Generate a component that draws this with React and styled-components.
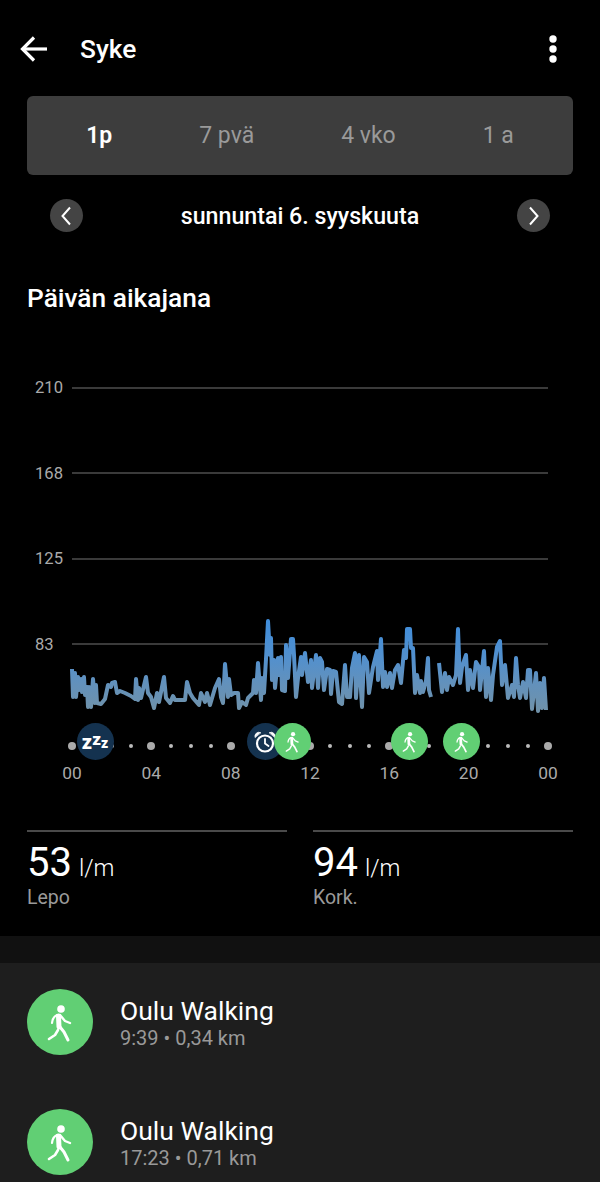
import React from 'react';
import styled, { createGlobalStyle } from 'styled-components';

const GlobalStyle = createGlobalStyle`
    html, body {
        margin: 0;
        background: #000;
    }
    body {
        font-family: Roboto, "Liberation Sans", sans-serif;
        color: #fff;
    }
`;

const RANGES = ['1p', '7 pvä', '4 vko', '1 a'];
const GRID_VALUES = [210, 168, 125, 83];
const HOUR_LABELS = ['00', '04', '08', '12', '16', '20', '00'];
const HOUR_DOTS = Array.from({ length: 25 }, (_, hour) => hour);

// heart rate samples as [x, y], with the sensor gap around 19h splitting the two runs
const HEART_RATE = [
    [
        [72, 669], [73, 697], [75, 673], [76, 697], [78, 677], [79, 690], [81, 679], [82, 692], [84, 677], [85, 695],
        [87, 687], [88, 707], [89, 687], [91, 707], [93, 679], [95, 703], [96, 685], [97, 703], [101, 704], [105, 699],
        [108, 685], [111, 687], [112, 683], [115, 682], [117, 693], [120, 691], [125, 693], [131, 696], [135, 699], [136, 679],
        [138, 700], [139, 688], [141, 698], [146, 677], [148, 693], [151, 697], [154, 708], [157, 693], [159, 702], [164, 677],
        [166, 698], [170, 703], [173, 696], [175, 700], [185, 700], [187, 682], [190, 693], [193, 698], [199, 705], [201, 693],
        [205, 702], [207, 693], [210, 705], [215, 688], [219, 679], [221, 697], [223, 703], [225, 664], [228, 697], [229, 679],
        [231, 695], [234, 693], [238, 693], [239, 708], [242, 702], [246, 705], [248, 698], [253, 693], [254, 680], [256, 693],
        [258, 663], [261, 700], [262, 678], [264, 693], [266, 659], [268, 621], [270, 655], [271, 638], [272, 680], [274, 660],
        [275, 688], [278, 658], [279, 675], [281, 657], [282, 690], [285, 691], [286, 645], [288, 678], [291, 639], [293, 639],
        [294, 655], [296, 697], [298, 678], [301, 657], [302, 675], [305, 653], [308, 682], [311, 660], [312, 688], [316, 655],
        [318, 688], [320, 658], [322, 662], [324, 690], [327, 669], [330, 670], [331, 694], [333, 671], [336, 672], [339, 702],
        [342, 704], [345, 665], [347, 697], [350, 697], [352, 668], [355, 653], [356, 698], [359, 655], [362, 707], [364, 657],
        [367, 662], [369, 693], [373, 667], [377, 651], [378, 680], [381, 639], [383, 687], [385, 672], [387, 687], [390, 673],
        [392, 688], [395, 670], [398, 665], [401, 683], [404, 650], [406, 658], [407, 629], [410, 629], [411, 648], [413, 648],
        [415, 693], [417, 675], [420, 693], [421, 681], [423, 692], [426, 681], [428, 658], [429, 690], [431, 697],
    ],
    [
        [439, 663], [442, 692], [445, 673], [447, 690], [449, 677], [453, 685], [456, 675], [458, 629], [460, 683], [462, 667],
        [466, 655], [468, 690], [470, 670], [473, 688], [476, 662], [479, 667], [480, 690], [484, 651], [486, 697], [488, 668],
        [491, 700], [493, 675], [497, 647], [500, 641], [502, 685], [505, 665], [508, 698], [512, 685], [514, 697], [516, 658],
        [518, 685], [520, 698], [523, 682], [526, 698], [528, 670], [530, 670], [532, 709], [536, 673], [538, 711], [540, 683],
        [542, 708], [544, 678], [546, 710],
    ],
];

const toPolyline = (points) => points.map(([x, y]) => `${x},${y}`).join(' ');

const WalkerIcon = ({ size }) => (
    <svg width={size} height={size} viewBox="0 0 66 66" fill="none" stroke="#fff" strokeLinecap="round" strokeLinejoin="round">
        <circle cx="34" cy="20" r="3.8" fill="#fff" stroke="none" />
        <path d="M31.5 27 L32 38" strokeWidth="5" />
        <path d="M30 26 Q25.5 28 25 34" strokeWidth="2.2" />
        <path d="M33 26 L38 32 L43 34" strokeWidth="2.4" />
        <path d="M33 38 L37 43 L41 51" strokeWidth="3" />
        <path d="M31 41 L28 46 L22 50" strokeWidth="2.6" />
    </svg>
);

const AlarmIcon = () => (
    <svg width="24" height="24" viewBox="0 0 24 24" fill="none" stroke="#fff" strokeWidth="2.2" strokeLinecap="round">
        <circle cx="12" cy="13.5" r="8" />
        <path d="M12 9 V13.5 L15.5 16" strokeWidth="1.8" />
        <path d="M2 7.2 A4 4 0 0 1 7.5 2.6 Z" fill="#fff" strokeWidth="0.8" />
        <path d="M22 7.2 A4 4 0 0 0 16.5 2.6 Z" fill="#fff" strokeWidth="0.8" />
    </svg>
);

const App = () => (
    <>
        <GlobalStyle />
        <Page>
            <Header>
                <BackButton>
                    <svg width="28" height="26" viewBox="0 0 28 26" fill="none" stroke="#fff" strokeWidth="3.2">
                        <path d="M27 13 H3" />
                        <path d="M14 1.5 L2.5 13 L14 24.5" />
                    </svg>
                </BackButton>
                <Title>Syke</Title>
                <MenuButton>
                    <svg width="8" height="28" viewBox="0 0 8 28" fill="#fff">
                        <circle cx="4" cy="4" r="3.7" />
                        <circle cx="4" cy="14" r="3.7" />
                        <circle cx="4" cy="24" r="3.7" />
                    </svg>
                </MenuButton>
            </Header>

            <Content>
                <RangeTabs>
                    {RANGES.map((range, index) => (
                        <RangeTab key={range} $active={index === 0}>{range}</RangeTab>
                    ))}
                </RangeTabs>

                <DateRow>
                    <RoundButton>
                        <svg width="12" height="20" viewBox="0 0 12 20" fill="none" stroke="#fff" strokeWidth="2">
                            <path d="M9 1.5 L1.5 10 L9 18.5" />
                        </svg>
                    </RoundButton>
                    <DateLabel>sunnuntai 6. syyskuuta</DateLabel>
                    <RoundButton>
                        <svg width="12" height="20" viewBox="0 0 12 20" fill="none" stroke="#fff" strokeWidth="2">
                            <path d="M3 1.5 L10.5 10 L3 18.5" />
                        </svg>
                    </RoundButton>
                </DateRow>

                <SectionTitle>Päivän aikajana</SectionTitle>
            </Content>

            <Chart>
                <GridRows>
                    {GRID_VALUES.map((value) => (
                        <GridRow key={value}>
                            <GridValue>{value}</GridValue>
                            <GridLine />
                        </GridRow>
                    ))}
                </GridRows>
                <HeartRateLine viewBox="0 610 600 110" width="600" height="110" fill="none">
                    <defs>
                        <linearGradient id="rateFade" gradientUnits="userSpaceOnUse" x1="0" y1="620" x2="0" y2="712">
                            <stop offset="0" stopColor="#3f8ddb" />
                            <stop offset="0.4" stopColor="#5290ce" />
                            <stop offset="0.7" stopColor="#6391bb" />
                            <stop offset="1" stopColor="#7092a9" />
                        </linearGradient>
                    </defs>
                    {HEART_RATE.map((run) => (
                        <polyline
                            key={run[0][0]}
                            points={toPolyline(run)}
                            stroke="url(#rateFade)"
                            strokeWidth="4"
                            strokeLinejoin="round"
                        />
                    ))}
                </HeartRateLine>

                <Timeline>
                    {HOUR_DOTS.map((hour) => (
                        <DotCell key={hour}>
                            <HourDot $major={hour % 4 === 0} />
                        </DotCell>
                    ))}
                    <Marker $center={95} $bg="#14324f">
                        <Sleep>
                            <SleepZ $size={20}>z</SleepZ>
                            <SleepZ $size={17} $lift={4}>z</SleepZ>
                            <SleepZ $size={14} $lift={1}>z</SleepZ>
                        </Sleep>
                    </Marker>
                    <Marker $center={265} $bg="#14324f"><AlarmIcon /></Marker>
                    <Marker $center={292} $bg="#61cf74"><WalkerIcon size={37} /></Marker>
                    <Marker $center={409} $bg="#61cf74"><WalkerIcon size={37} /></Marker>
                    <Marker $center={461.5} $bg="#61cf74"><WalkerIcon size={37} /></Marker>
                </Timeline>

                <HourLabels>
                    {HOUR_LABELS.map((label, index) => (
                        <HourLabel key={index}>{label}</HourLabel>
                    ))}
                </HourLabels>
            </Chart>

            <Stats>
                <Stat>
                    <StatValue>53<StatUnit>l/m</StatUnit></StatValue>
                    <StatLabel>Lepo</StatLabel>
                </Stat>
                <Stat>
                    <StatValue>94<StatUnit>l/m</StatUnit></StatValue>
                    <StatLabel>Kork.</StatLabel>
                </Stat>
            </Stats>

            <Spacer />

            <ActivityList>
                <Activity>
                    <ActivityBadge><WalkerIcon size={66} /></ActivityBadge>
                    <ActivityText>
                        <ActivityName>Oulu Walking</ActivityName>
                        <ActivityMeta>9:39 • 0,34 km</ActivityMeta>
                    </ActivityText>
                </Activity>
                <Activity>
                    <ActivityBadge><WalkerIcon size={66} /></ActivityBadge>
                    <ActivityText>
                        <ActivityName>Oulu Walking</ActivityName>
                        <ActivityMeta>17:23 • 0,71 km</ActivityMeta>
                    </ActivityText>
                </Activity>
            </ActivityList>
        </Page>
    </>
);

const Page = styled.div`
    width: 600px;
    height: 1182px;
    overflow: hidden;
    background: #000;
`;

const Header = styled.header`
    display: flex;
    align-items: center;
    height: 94px;
    padding: 2px 0 0 20px;
`;

const BackButton = styled.div`
    display: flex;
    width: 60px;
`;

const Title = styled.h1`
    flex: 1;
    margin: 0;
    font-size: 26.3px;
    font-weight: 500;
`;

const MenuButton = styled.div`
    display: flex;
    margin-right: 43px;
`;

const Content = styled.div`
    padding: 0 27px;
`;

const RangeTabs = styled.div`
    display: flex;
    justify-content: center;
    align-items: center;
    gap: 87px;
    height: 79px;
    background: #3d3d3d;
    border-radius: 6px;
`;

const RangeTab = styled.span`
    font-size: 23px;
    font-weight: ${(props) => (props.$active ? 600 : 400)};
    color: ${(props) => (props.$active ? '#fff' : '#9a9a9a')};
`;

const DateRow = styled.div`
    display: flex;
    justify-content: space-between;
    align-items: center;
    margin: 24px 23px 0;
    height: 33px;
`;

const RoundButton = styled.div`
    display: flex;
    align-items: center;
    justify-content: center;
    width: 33px;
    height: 33px;
    border-radius: 50%;
    background: #444;
`;

const DateLabel = styled.span`
    font-size: 23.2px;
    font-weight: 500;
`;

const SectionTitle = styled.h2`
    margin: 51px 0 0;
    font-size: 26.3px;
    line-height: 30px;
    font-weight: 500;
`;

const Chart = styled.div`
    position: relative;
    margin-top: 32px;
`;

const GridRows = styled.div`
    display: flex;
    flex-direction: column;
`;

const GridRow = styled.div`
    display: flex;
    align-items: center;
    height: 85.5px;
    padding: 0 52px 0 35px;
`;

const GridValue = styled.span`
    width: 37px;
    font-size: 16.6px;
    color: #aaa;
`;

const GridLine = styled.div`
    flex: 1;
    height: 2px;
    background: #3a3a3a;
`;

const HeartRateLine = styled.svg`
    position: absolute;
    top: 265px;
    left: 0;
`;

const Timeline = styled.div`
    position: relative;
    display: flex;
    justify-content: space-between;
    align-items: center;
    height: 36px;
    margin: 41px 48px 0 68px;
`;

const DotCell = styled.div`
    display: flex;
    justify-content: center;
    width: 8px;
`;

const HourDot = styled.div`
    width: ${(props) => (props.$major ? 8 : 4)}px;
    height: ${(props) => (props.$major ? 8 : 4)}px;
    border-radius: 50%;
    background: ${(props) => (props.$major ? '#aaa' : '#bbb')};
`;

const Marker = styled.div`
    position: absolute;
    top: -5px;
    left: ${(props) => props.$center - 68 - 18.5}px;
    display: flex;
    align-items: center;
    justify-content: center;
    width: 37px;
    height: 37px;
    border-radius: 50%;
    background: ${(props) => props.$bg};
`;

const Sleep = styled.div`
    display: flex;
    align-items: baseline;
    font-weight: 900;
    line-height: 1;
`;

const SleepZ = styled.span`
    position: relative;
    bottom: ${(props) => props.$lift || 0}px;
    font-size: ${(props) => props.$size}px;
`;

const HourLabels = styled.div`
    display: flex;
    justify-content: space-between;
    margin: 0 32px 0 52px;
    height: 18px;
`;

const HourLabel = styled.span`
    width: 40px;
    font-size: 17.4px;
    line-height: 18px;
    text-align: center;
    color: #aaa;
`;

const Stats = styled.div`
    display: grid;
    grid-template-columns: 260px 260px;
    gap: 26px;
    margin-top: 48px;
    padding: 0 27px;
    height: 106px;
`;

const Stat = styled.div`
    border-top: 2px solid #4a4a4a;
`;

const StatValue = styled.div`
    margin-top: 13px;
    font-size: 40px;
    line-height: 36px;
    font-weight: 400;
`;

const StatUnit = styled.span`
    margin-left: 7px;
    font-size: 23.5px;
    font-weight: 300;
`;

const StatLabel = styled.div`
    font-size: 19.5px;
    line-height: 24px;
    color: #9a9a9a;
`;

const Spacer = styled.div`
    height: 27px;
    background: #111;
`;

const ActivityList = styled.div`
    background: #1e1e1e;
    padding-top: 26px;
    height: 193px;
`;

const Activity = styled.div`
    display: flex;
    align-items: center;
    gap: 27px;
    height: 66px;
    padding-left: 27px;
    margin-bottom: 53.5px;
`;

const ActivityBadge = styled.div`
    display: flex;
    width: 66px;
    height: 66px;
    border-radius: 50%;
    background: #61cf74;
`;

const ActivityText = styled.div`
    display: flex;
    flex-direction: column;
`;

const ActivityName = styled.div`
    font-size: 26.5px;
    line-height: 32px;
`;

const ActivityMeta = styled.div`
    font-size: 20px;
    line-height: 22px;
    color: #999;
`;

export default App;
